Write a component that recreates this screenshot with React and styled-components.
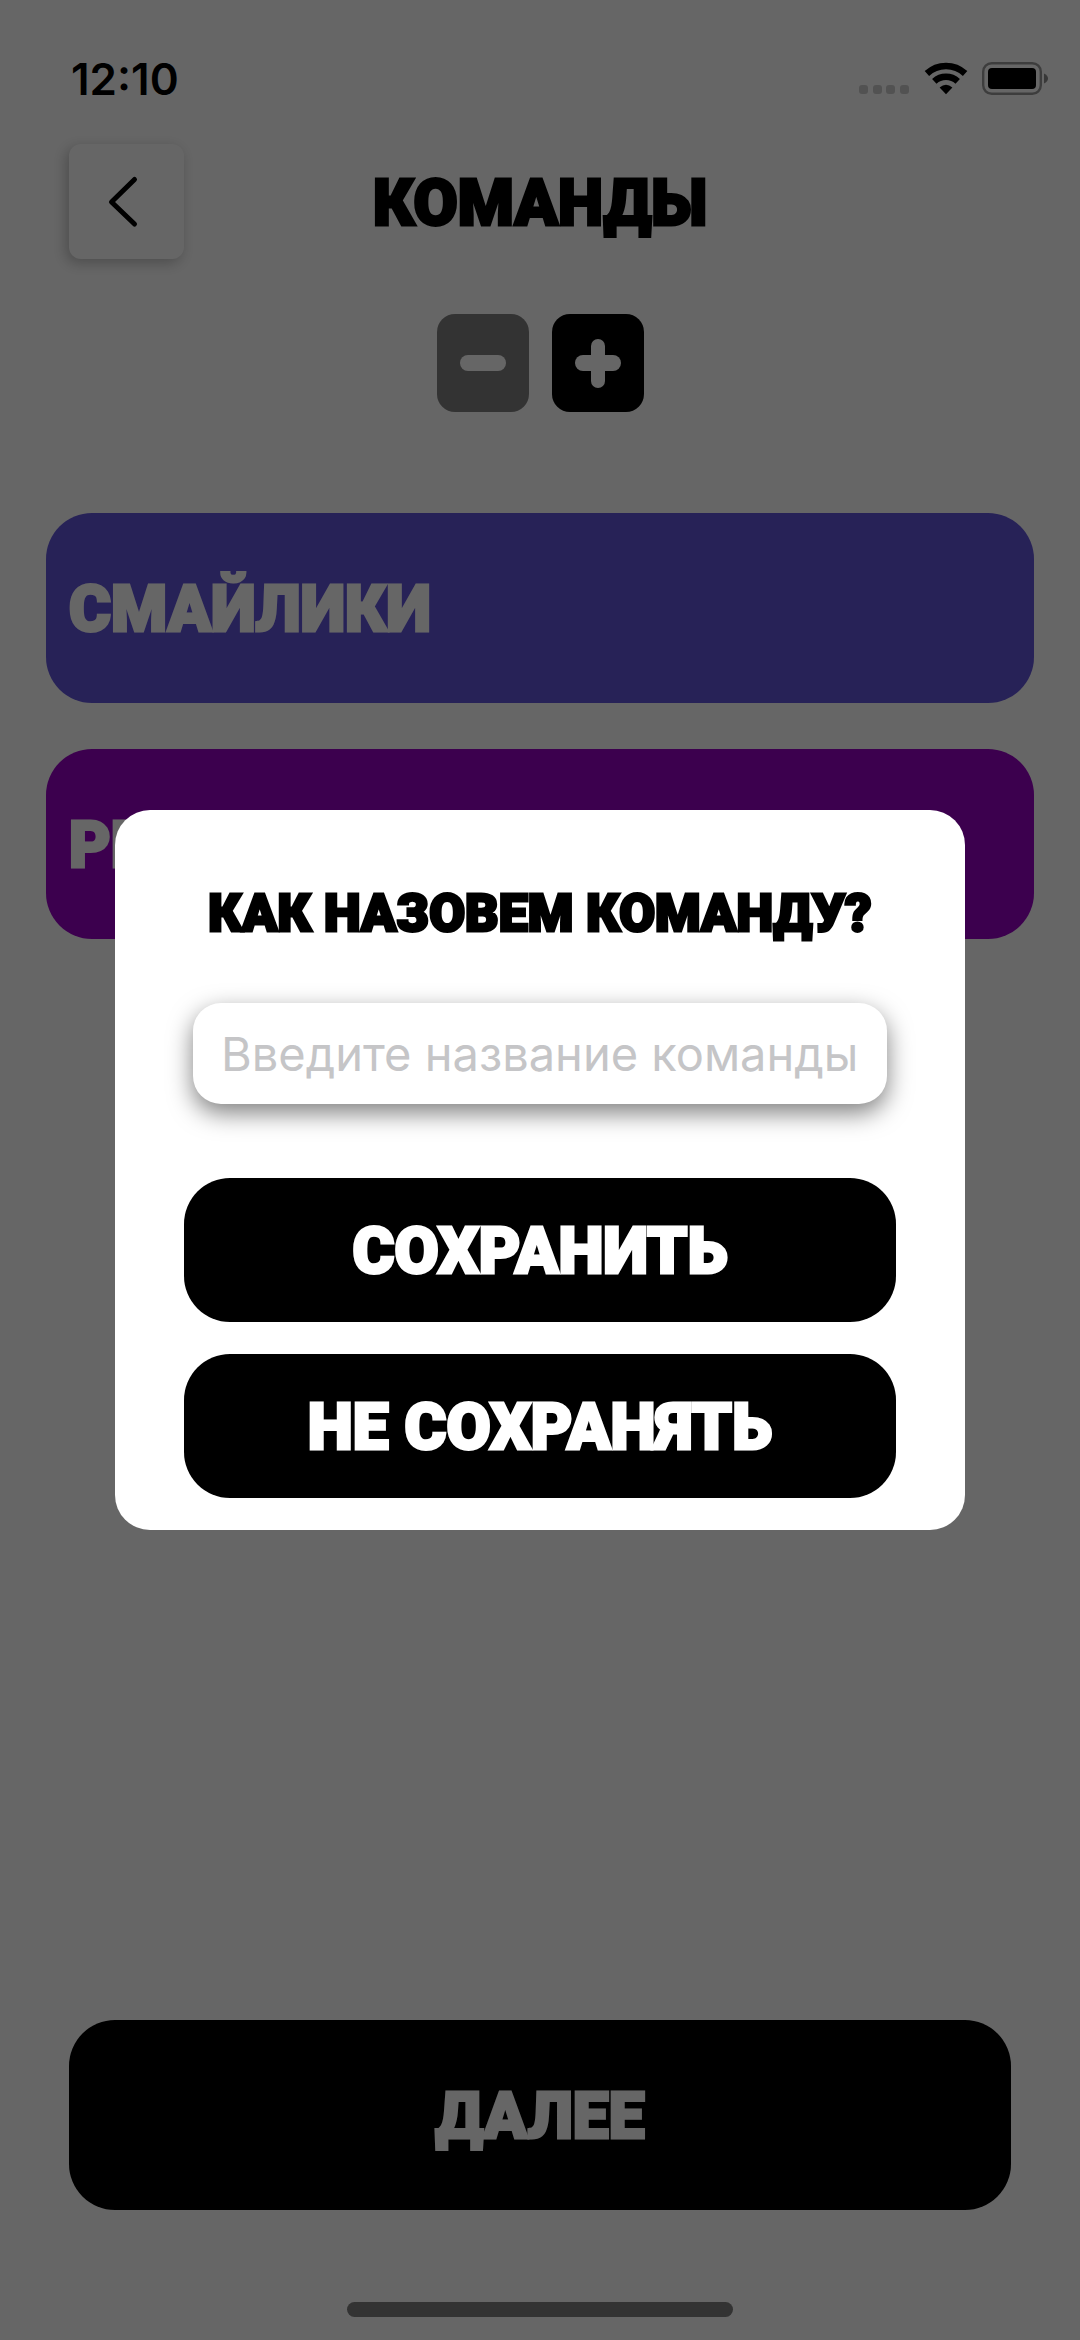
import React from "react";
import styled, { createGlobalStyle } from "styled-components";

const GlobalStyle = createGlobalStyle`
  *, *::before, *::after { box-sizing: border-box; }
  body { margin: 0; background: #ffffff; }
  button, input { font: inherit; border: 0; padding: 0; margin: 0; }
  h1, ul { margin: 0; padding: 0; font: inherit; }
`;

const display = `
  font-family: Roboto, "Noto Sans", sans-serif;
  font-weight: 900;
  font-size: 64px;
  line-height: 76px;
  -webkit-text-stroke: 3px currentColor;
`;

const Screen = styled.div`
  min-height: 100vh;
  display: flex;
  flex-direction: column;
  background: #ffffff;
  color: #000000;
`;

const StatusBar = styled.div`
  display: flex;
  justify-content: space-between;
  align-items: center;
  height: 144px;
  padding: 13px 32px 0 71px;
`;

const Clock = styled.time`
  font: 600 44px/52px Inter, sans-serif;
`;

const StatusIcons = styled.div`
  display: flex;
  align-items: center;
  gap: 14px;
`;

const Header = styled.header`
  display: grid;
  grid-template-columns: 1fr auto 1fr;
  align-items: center;
  padding: 0 69px;
`;

const BackButton = styled.button`
  display: grid;
  place-items: center;
  width: 115px;
  height: 115px;
  border-radius: 12px;
  background: #ffffff;
  box-shadow: -3px 4px 14px rgba(0, 0, 0, 0.25);
`;

const Title = styled.h1`
  ${display}
  padding-top: 4px;
`;

const Stepper = styled.div`
  display: flex;
  justify-content: center;
  gap: 23px;
  margin-top: 55px;
`;

const StepButton = styled.button`
  display: grid;
  place-items: center;
  width: 92px;
  height: 98px;
  border-radius: 18px;
  background: ${({ disabled }) => (disabled ? "#808080" : "#000000")};
`;

const TeamList = styled.ul`
  display: flex;
  flex-direction: column;
  gap: 46px;
  margin-top: 101px;
  padding: 0 46px;
  list-style: none;
`;

const Team = styled.li`
  ${display}
  display: flex;
  align-items: center;
  height: 190px;
  padding: 4px 23px 0;
  border-radius: 46px;
  background: ${({ $color }) => $color};
  color: #ffffff;
`;

const Footer = styled.footer`
  display: flex;
  flex-direction: column;
  align-items: center;
  margin-top: auto;
  padding: 0 69px 23px;
`;

const PillButton = styled.button`
  ${display}
  width: 100%;
  height: ${({ $large }) => ($large ? 190 : 144)}px;
  padding-top: 4px;
  border-radius: 46px;
  background: #000000;
  color: #ffffff;
`;

const HomeIndicator = styled.div`
  width: 386px;
  height: 15px;
  margin-top: 92px;
  border-radius: 8px;
  background: #808080;
`;

const Backdrop = styled.div`
  position: fixed;
  inset: 0;
  display: flex;
  align-items: center;
  justify-content: center;
  background: rgba(0, 0, 0, 0.6);
`;

const Dialog = styled.form`
  display: flex;
  flex-direction: column;
  flex: 1;
  min-width: 0;
  margin: 0 115px;
  padding: 72px 69px 32px;
  border-radius: 35px;
  background: #ffffff;
`;

const DialogTitle = styled.label`
  ${display}
  font-size: 52px;
  line-height: 64px;
  text-align: center;
`;

const NameInput = styled.input`
  height: 101px;
  margin: 57px 9px 0;
  padding: 0 28px;
  border-radius: 28px;
  background: #ffffff;
  box-shadow: 0 9px 24px rgba(0, 0, 0, 0.5);
  font: 400 47px/56px Inter, sans-serif;
  &::placeholder { color: #c5c5c7; opacity: 1; }
`;

const Actions = styled.div`
  display: flex;
  flex-direction: column;
  gap: 32px;
  margin-top: 74px;
`;

const SignalDots = () => (
  <svg width="51" height="33" viewBox="0 0 51 33" fill="#000" fillOpacity="0.2" aria-hidden="true">
    {[0, 14, 27, 41].map((x) => (
      <rect key={x} x={x} y="23" width="9" height="9" rx="3" />
    ))}
  </svg>
);

const WifiIcon = () => (
  <svg width="44" height="33" viewBox="0 0 44 33" fill="none" stroke="#000" strokeWidth="6.5" aria-hidden="true">
    <path d="M2.9 11.5A28 28 0 0 1 41.1 11.5" />
    <path d="M10.3 19.4A17.2 17.2 0 0 1 33.7 19.4" />
    <path d="M22 32.2L15.6 25.4Q22 20 28.4 25.4Z" fill="#000" stroke="none" />
  </svg>
);

const BatteryIcon = () => (
  <svg width="66" height="33" viewBox="0 0 66 33" aria-hidden="true">
    <rect x="1.2" y="1.2" width="57.6" height="30.6" rx="8.5" fill="none" stroke="#000" strokeOpacity="0.4" strokeWidth="2.4" />
    <rect x="6" y="6" width="48" height="21" rx="4" />
    <path d="M62 11.5Q66 13.5 66 16.5T62 21.5Z" fillOpacity="0.45" />
  </svg>
);

const ChevronIcon = () => (
  <svg width="50" height="56" viewBox="0 0 50 56" fill="none" stroke="#000" strokeWidth="5" strokeLinecap="round" strokeLinejoin="round" aria-hidden="true">
    <path d="M32.5 5.5L9.5 28L32.5 50" />
  </svg>
);

const MinusIcon = () => (
  <svg width="48" height="50" viewBox="0 0 48 50" fill="#fff" aria-hidden="true">
    <rect x="1" y="17" width="46" height="16" rx="8" />
  </svg>
);

const PlusIcon = () => (
  <svg width="48" height="50" viewBox="0 0 48 50" fill="#fff" aria-hidden="true">
    <rect x="1" y="17" width="46" height="16" rx="8" />
    <rect x="17" y="1" width="14" height="49" rx="7" />
  </svg>
);

const teams = [
  { name: "СМАЙЛИКИ", color: "#6255da" },
  { name: "РЫБКИ", color: "#9600c3" },
];

export default function App() {
  return (
    <>
      <GlobalStyle />
      <Screen>
        <StatusBar>
          <Clock>12:10</Clock>
          <StatusIcons>
            <SignalDots />
            <WifiIcon />
            <BatteryIcon />
          </StatusIcons>
        </StatusBar>
        <Header>
          <BackButton type="button" aria-label="Назад"><ChevronIcon /></BackButton>
          <Title>КОМАНДЫ</Title>
        </Header>
        <Stepper>
          <StepButton type="button" aria-label="Убрать команду" disabled><MinusIcon /></StepButton>
          <StepButton type="button" aria-label="Добавить команду"><PlusIcon /></StepButton>
        </Stepper>
        <TeamList>
          {teams.map((team) => (
            <Team key={team.name} $color={team.color}>{team.name}</Team>
          ))}
        </TeamList>
        <Footer>
          <PillButton type="button" $large>ДАЛЕЕ</PillButton>
          <HomeIndicator />
        </Footer>
      </Screen>
      <Backdrop>
        <Dialog role="dialog" aria-modal="true" onSubmit={(event) => event.preventDefault()}>
          <DialogTitle htmlFor="team-name">КАК НАЗОВЕМ КОМАНДУ?</DialogTitle>
          <NameInput id="team-name" type="text" placeholder="Введите название команды" />
          <Actions>
            <PillButton type="submit">СОХРАНИТЬ</PillButton>
            <PillButton type="button">НЕ СОХРАНЯТЬ</PillButton>
          </Actions>
        </Dialog>
      </Backdrop>
    </>
  );
}
